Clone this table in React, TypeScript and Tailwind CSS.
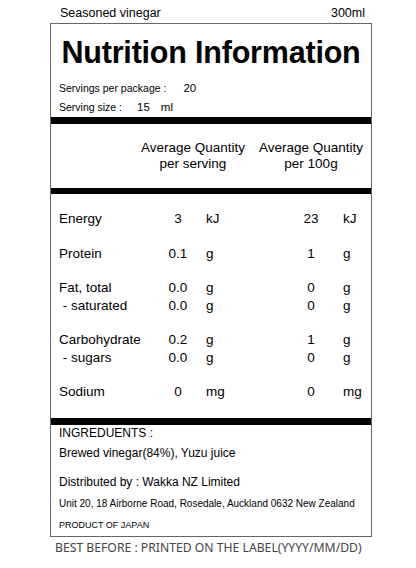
import React from "react"

type Row = { label: string; v1: string; u1: string; v2: string; u2: string }

const groups: Row[][] = [
    [{ label: "Energy", v1: "3", u1: "kJ", v2: "23", u2: "kJ" }],
    [{ label: "Protein", v1: "0.1", u1: "g", v2: "1", u2: "g" }],
    [
        { label: "Fat, total", v1: "0.0", u1: "g", v2: "0", u2: "g" },
        { label: " - saturated", v1: "0.0", u1: "g", v2: "0", u2: "g" },
    ],
    [
        { label: "Carbohydrate", v1: "0.2", u1: "g", v2: "1", u2: "g" },
        { label: " - sugars", v1: "0.0", u1: "g", v2: "0", u2: "g" },
    ],
    [{ label: "Sodium", v1: "0", u1: "mg", v2: "0", u2: "mg" }],
]

function Bar() {
    return <div className="h-[7px] bg-black" />
}

export default function App() {
    return (
        <div className="w-[416px] h-[568px] bg-white text-black font-['Liberation_Sans',Arial,sans-serif]">
            <div className="h-[23px] flex items-center justify-between pl-[60px] pr-[51px] pt-[4px] text-[12.5px]">
                <span>Seasoned vinegar</span>
                <span>300ml</span>
            </div>

            <div className="ml-[50px] w-[322px] border border-[#666]">
                <h1 className="pt-[10px] pb-[9px] text-center text-[30.5px] leading-[36px] font-bold tracking-[-0.2px]">
                    Nutrition Information
                </h1>
                <div className="pl-[8px]">
                    <div className="h-[19px] flex items-center">
                        <span className="text-[10.5px]">Servings per package :</span>
                        <span className="text-[11.5px] ml-[17px]">20</span>
                    </div>
                    <div className="h-[19px] flex items-center">
                        <span className="text-[10.5px]">Serving size :</span>
                        <span className="text-[11.5px] ml-[15px]">15</span>
                        <span className="text-[11.5px] ml-[11px]">ml</span>
                    </div>
                </div>
                <Bar />

                <div className="h-[64px] flex items-center text-[13.5px] leading-[16px]">
                    <div className="w-[88px]" />
                    <div className="w-[108px] text-center">
                        Average Quantity
                        <br />
                        per serving
                    </div>
                    <div className="w-[110px] ml-[9px] text-center">
                        Average Quantity
                        <br />
                        per 100g
                    </div>
                </div>
                <div className="h-[6px] bg-black" />

                <div className="pt-[16px] pb-[17px] flex flex-col gap-[17px] text-[13.5px] leading-[17.5px]">
                    {groups.map((g, i) => (
                        <div key={i}>
                            {g.map((r) => (
                                <div key={r.label} className="grid grid-cols-[107px_40px_93px_40px_1fr]">
                                    <span className="pl-[8px] whitespace-pre">{r.label}</span>
                                    <span className="text-center">{r.v1}</span>
                                    <span className="pl-[8px]">{r.u1}</span>
                                    <span className="text-center">{r.v2}</span>
                                    <span className="pl-[12px]">{r.u2}</span>
                                </div>
                            ))}
                        </div>
                    ))}
                </div>
                <Bar />

                <div className="pl-[8px] pb-[5px]">
                    <div className="text-[12px] leading-[16px]">INGREDUENTS :</div>
                    <div className="mt-[4px] text-[12px] leading-[16px]">Brewed vinegar(84%), Yuzu juice</div>
                    <div className="mt-[13px] text-[12px] leading-[16px]">Distributed by : Wakka NZ Limited</div>
                    <div className="mt-[7px] text-[10px] leading-[14px]">
                        Unit 20, 18 Airborne Road, Rosedale, Auckland 0632 New Zealand
                    </div>
                    <div className="mt-[8px] text-[9px] leading-[12px]">PRODUCT OF JAPAN</div>
                </div>
            </div>

            <div className="mt-[3px] pl-[55px] text-[12.2px] leading-[16px] text-[#444] font-['Noto_Sans',sans-serif]">
                BEST BEFORE : PRINTED ON THE LABEL(YYYY/MM/DD)
            </div>
        </div>
    )
}
